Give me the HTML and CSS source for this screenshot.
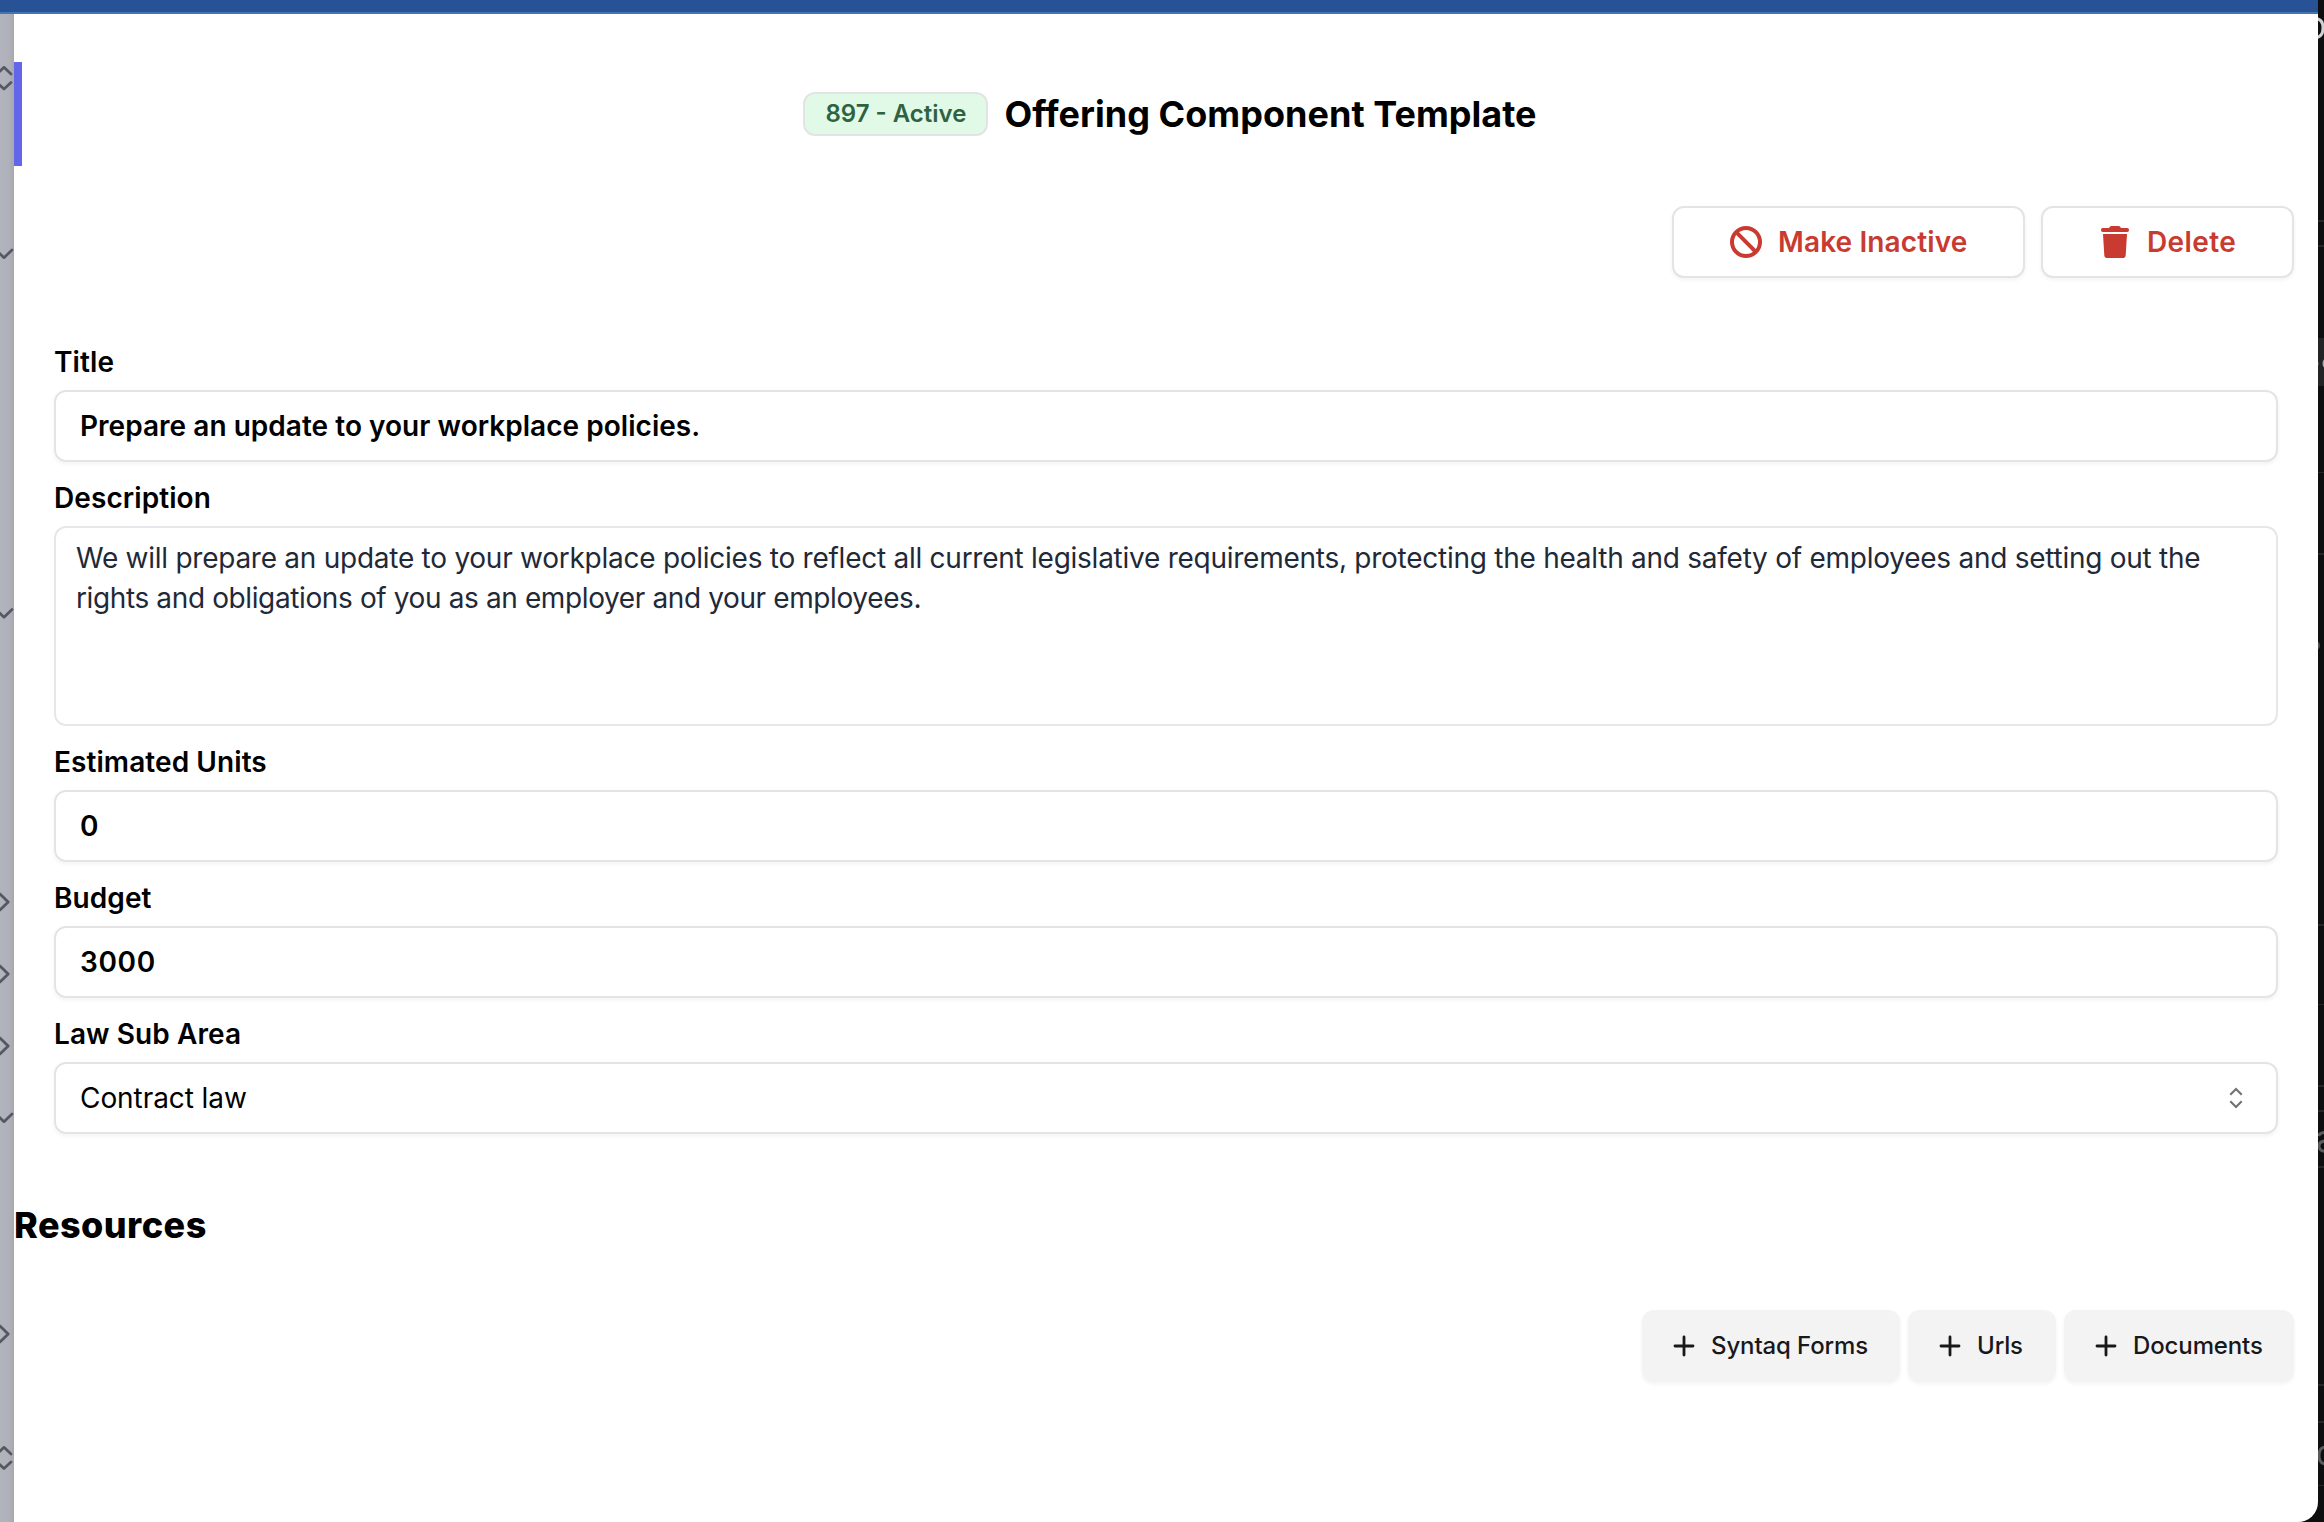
FILE: index.html
```html
<!DOCTYPE html>
<html lang="en">
<head>
<meta charset="utf-8">
<title>Offering Component Template</title>
<link rel="stylesheet" href="styles.css">
</head>
<body>
<div class="window">
  <div class="titlebar"></div>
  <div class="window-body">
    <svg class="rail" width="14" height="1508" viewBox="0 14 14 1508" fill="none" stroke="#555861" stroke-width="2.7" stroke-linecap="round" stroke-linejoin="round">
      <path d="M-3 74 4 67.3l7 6.7M-3 82.5l7 6.5 7-6.5"/>
      <path d="M-4 250l8 7.7 8-7.7"/>
      <path d="M-4 609.500l8 7.700 8-7.700"/>
      <path d="M0 894l8.200 8L0 910"/>
      <path d="M0 966l8.200 8L0 982"/>
      <path d="M0 1038l8.200 8L0 1054"/>
      <path d="M-4 1114l8 7.700 8-7.700"/>
      <path d="M0 1326l8.200 8L0 1342"/>
      <path d="M-3 1454l7-6.700 7 6.700M-3 1462l7 6.500 7-6.500"/>
    </svg>
    <main class="panel">
      <header class="panel-header">
        <span class="badge">897 - Active</span>
        <h1 class="panel-title">Offering Component Template</h1>
      </header>
      <div class="actions">
        <button class="btn btn-danger btn-inactive">
          <svg width="32" height="32" viewBox="0 0 32 32" fill="none" stroke="currentColor" stroke-width="4"><circle cx="16" cy="16" r="14"/><path d="M6.200 6.200 25.800 25.800"/></svg>
          <span>Make Inactive</span>
        </button>
        <button class="btn btn-danger btn-delete">
          <svg width="32" height="32" viewBox="0 0 32 32" fill="currentColor"><path d="M3.800 2H10l.9-1.200Q11.400 0 12.400 0h7.200q1 0 1.500.8L22 2h6.200Q30 2 30 3.800v.4Q30 6 28.200 6H3.800Q2 6 2 4.200v-.4Q2 2 3.800 2ZM4 8h24l-1.300 21.200Q26.500 32 23.700 32H8.300Q5.500 32 5.300 29.200Z"/></svg>
          <span>Delete</span>
        </button>
      </div>
      <form class="fields">
        <div class="label">Title</div>
        <div class="control control-strong">Prepare an update to your workplace policies.</div>
        <div class="label">Description</div>
        <div class="textarea"><span class="line">We will prepare an update to your workplace policies to reflect all current legislative requirements, protecting the health and safety of employees and setting out the</span> <span class="line line-last">rights and obligations of you as an employer and your employees.</span></div>
        <div class="label">Estimated Units</div>
        <div class="control control-number">0</div>
        <div class="label">Budget</div>
        <div class="control control-number">3000</div>
        <div class="label">Law Sub Area</div>
        <div class="control select"><span>Contract law</span>
          <svg width="14" height="22" viewBox="0 0 14 22" fill="none" stroke="#737373" stroke-width="2.200"><path d="M1.300 7.700 7 2l5.700 5.700M1.300 14.300 7 20l5.700-5.700"/></svg>
        </div>
      </form>
      <h2 class="section-title">Resources</h2>
      <div class="resource-actions">
        <button class="btn btn-muted btn-forms"><svg class="plus" viewBox="0 0 28 28"><path d="M14 5v18M5 14h18"/></svg><span>Syntaq Forms</span></button>
        <button class="btn btn-muted btn-urls"><svg class="plus" viewBox="0 0 28 28"><path d="M14 5v18M5 14h18"/></svg><span>Urls</span></button>
        <button class="btn btn-muted btn-docs"><svg class="plus" viewBox="0 0 28 28"><path d="M14 5v18M5 14h18"/></svg><span>Documents</span></button>
      </div>
    </main>
  </div>
</div>
<aside class="behind">
  <svg width="26" height="1522" viewBox="-20 0 26 1522">
    <path fill="#232425" d="M-20 338H6v48H-20z"/>
    <path fill="#242627" d="M-20 220H6v2H-20zM-20 245H6v2H-20zM-20 472H6v1H-20zM-20 553H6v2H-20zM-20 924H6v2H-20zM-20 1004H6v1H-20zM-20 1085H6v2H-20zM-20 1110H6v2H-20zM-20 1166H6v2H-20zM-20 1384H6v2H-20zM-20 1421H6v2H-20zM-20 1485H6v1H-20z"/>
    <circle cx="-3" cy="645.500" r="5" fill="#4c4d4e"/>
    <ellipse cx="8" cy="363.500" rx="3.500" ry="5" fill="#a5a5a5"/>
    <path fill="#4c4d4e" d="M0 362h1v3H0z"/>
    <path fill="none" stroke="#d0d0d0" stroke-width="3" d="M-3 18.500Q5 18.500 5 28T-3 37.500"/>
    <path fill="none" stroke="#5a5b5c" stroke-width="3" d="M.5 1136Q2 1132.500 7 1132.500M7 1141Q1 1141.500 1 1146t6 5.500"/>
    <path fill="none" stroke="#5a5b5c" stroke-width="3" d="M8 1447Q1 1447 1 1455.500t7 8.500"/>
  </svg>
</aside>
</body>
</html>
```
FILE: styles.css
```css
* { box-sizing: border-box; }

body {
  margin: 0;
  width: 2324px;
  height: 1522px;
  display: flex;
  overflow: hidden;
  background: #0d0e0f;
  font-family: Inter, "Liberation Sans", sans-serif;
  color: #000;
}

.window {
  width: 2318px;
  height: 1522px;
  display: flex;
  flex-direction: column;
  overflow: hidden;
  background: #fff;
  border-bottom-right-radius: 20px;
}

.titlebar {
  height: 14px;
  flex: none;
  background: #285296;
  border-bottom: 2px solid #4475b3;
}

.window-body {
  flex: 1;
  display: flex;
}

.rail {
  flex: none;
  background: linear-gradient(90deg, #b1b4bd 0, #b0b2bb 8px, #a7a8ae 14px);
}

.panel {
  flex: 1;
  display: flex;
  flex-direction: column;
  padding-top: 48px;
}

.panel-header {
  height: 104px;
  display: flex;
  align-items: center;
  justify-content: center;
  gap: 16px;
  border-left: 8px solid #6466e9;
}

.badge {
  width: 185px;
  height: 44px;
  border: 2px solid #e2e4e3;
  border-radius: 12px;
  background: #e1fae8;
  color: #2f6340;
  font-size: 24px;
  font-weight: 600;
  line-height: 40px;
  text-align: center;
}

.panel-title {
  margin: 0;
  font-size: 36px;
  font-weight: 700;
  line-height: 46px;
  letter-spacing: .03px;
}

.actions {
  display: flex;
  justify-content: flex-end;
  gap: 16px;
  padding: 40px 24px 0 0;
}

.btn {
  height: 72px;
  display: flex;
  align-items: center;
  justify-content: flex-start;
  border-radius: 12px;
  box-shadow: 0 2px 4px rgba(0, 0, 0, .05);
  font-family: inherit;
  white-space: nowrap;
}

.btn svg { flex: none; }

.btn-danger {
  padding: 0 0 0 56px;
  gap: 16px;
  border: 2px solid #e4e4e4;
  background: #fff;
  color: #c93a31;
  font-size: 28px;
  font-weight: 600;
  letter-spacing: .12px;
}

.btn-inactive { width: 353px; }
.btn-delete { width: 253px; letter-spacing: .4px; }

.fields {
  display: flex;
  flex-direction: column;
  padding: 64px 40px 0 40px;
}

.label {
  height: 40px;
  margin-bottom: 8px;
  font-size: 28px;
  font-weight: 600;
  line-height: 41px;
  letter-spacing: .08px;
}

.control {
  height: 72px;
  margin-bottom: 16px;
  padding: 0 33px 0 24px;
  display: flex;
  align-items: center;
  border: 2px solid #e4e4e4;
  border-radius: 12px;
  box-shadow: 0 2px 4px rgba(0, 0, 0, .05);
  font-size: 28px;
  line-height: 40px;
}

.control-strong { font-weight: 600; letter-spacing: .03px; }
.control-number { font-weight: 600; letter-spacing: .65px; }

.select {
  margin-bottom: 0;
  justify-content: space-between;
  letter-spacing: -.07px;
}

.textarea {
  height: 200px;
  margin-bottom: 16px;
  padding: 10px 20px;
  border: 2px solid #e5e7eb;
  border-radius: 12px;
  color: #1f2937;
  font-size: 28px;
  line-height: 40px;
}

.line { letter-spacing: -.256px; }
.line-last { letter-spacing: -.38px; }

.section-title {
  margin: 67px 0 61px;
  font-size: 36px;
  font-weight: 800;
  line-height: 48px;
  letter-spacing: .45px;
}

.resource-actions {
  display: flex;
  justify-content: flex-end;
  gap: 8px;
  padding-right: 24px;
}

.btn-muted {
  padding: 0 0 1px 28px;
  gap: 13px;
  border: 0;
  background: #f3f3f3;
  color: #18181b;
  font-size: 24px;
  font-weight: 500;
  letter-spacing: -.12px;
}

.btn-forms { width: 258px; }
.btn-urls { width: 148px; }
.btn-docs { width: 230px; }

.plus {
  width: 28px;
  height: 28px;
  fill: none;
  stroke: currentColor;
  stroke-width: 2.8;
  stroke-linecap: round;
}

/* The window underneath, visible past the right edge and the rounded corner. */
.behind {
  width: 26px;
  flex: none;
  margin-left: -20px;
  position: relative;
  z-index: -1;
}

.behind svg { display: block; }
```
